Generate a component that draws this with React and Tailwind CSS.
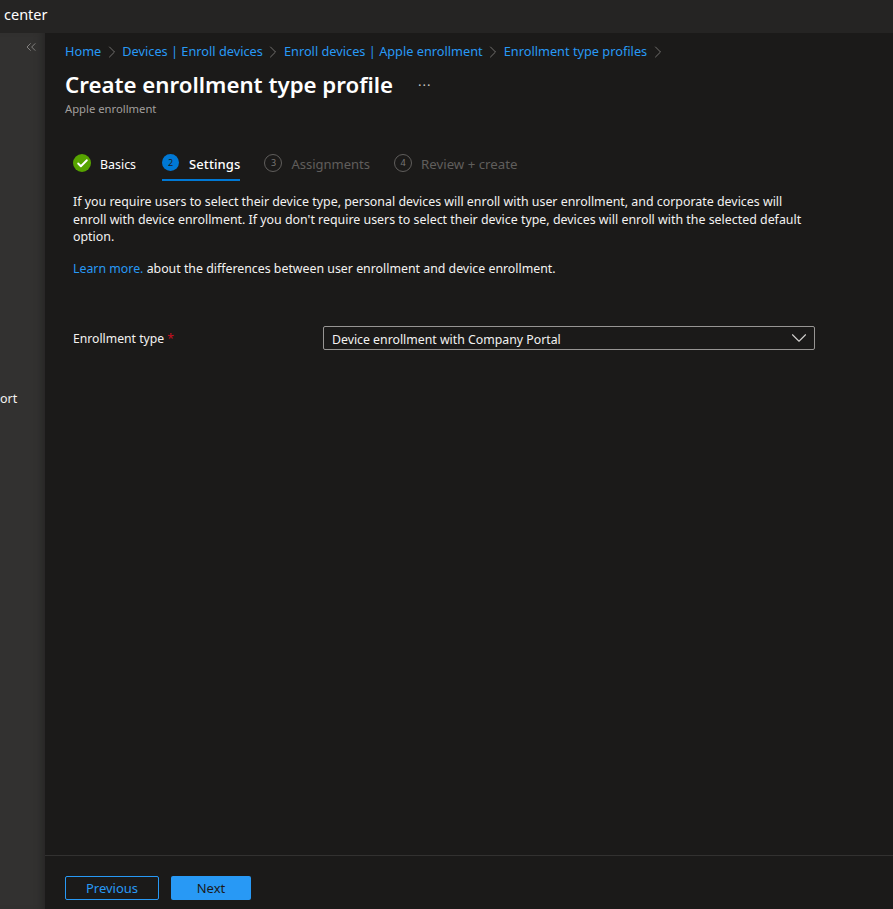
import { Check, ChevronDown, ChevronRight, ChevronsLeft } from 'lucide-react';

const crumbs = ['Home', 'Devices | Enroll devices', 'Enroll devices | Apple enrollment', 'Enrollment type profiles'];

const App = () => {
  return (
    <div className="h-[909px] w-[893px] overflow-hidden flex flex-col bg-[#1b1a19] text-white font-['Noto_Sans',sans-serif]">
      {/* Top bar */}
      <div className="h-[33px] shrink-0 bg-[#252423] pl-1 pt-[4px] text-[14.5px] leading-5">center</div>

      <div className="flex flex-1 min-h-0">
        {/* Collapsed nav */}
        <div className="w-[45px] shrink-0 flex flex-col bg-[#323130] shadow-[inset_-8px_0_8px_-6px_#252423] overflow-hidden">
          <div className="flex justify-end pr-[6px] pt-[6px] h-[356px]">
            <ChevronsLeft size={16} strokeWidth={1.1} className="text-[#a19f9d]" />
          </div>
          <div className="text-[12.5px] leading-5 text-[#f3f2f1]">ort</div>
        </div>

        <div className="flex-1 min-w-0 flex flex-col">
          <div className="flex-1 min-h-0 pl-5">
            {/* Breadcrumb */}
            <div className="flex items-center h-[18px] mt-[10px] text-[12.75px] text-[#2899f5] whitespace-nowrap">
              {crumbs.map((c) => (
                <span key={c} className="flex items-center">
                  {c}
                  <ChevronRight size={20} strokeWidth={1.1} className="text-[#797775] mx-[0.5px]" />
                </span>
              ))}
            </div>

            {/* Title */}
            <div className="flex items-center mt-[9px] h-[30px]">
              <h1 className="text-[22.25px] font-semibold leading-[30px]">Create enrollment type profile</h1>
              <span className="ml-[25px] text-[13px] leading-none text-[#c8c6c4] tracking-[1px] -mt-2">...</span>
            </div>
            <div className="text-[11.25px] leading-4 text-[#a19f9d] mt-[1px]">Apple enrollment</div>

            {/* Wizard tabs */}
            <div className="flex ml-2 mt-[30px] text-[13px] h-[37px]">
              <div className="flex items-start pt-[7px] mr-[26px]">
                <span className="w-[18px] h-[18px] rounded-full bg-[#57a300] flex items-center justify-center">
                  <Check size={13} strokeWidth={3.5} className="text-white" />
                </span>
                <span className="ml-[9px] mt-[2px] leading-[18px] text-[12.4px]">Basics</span>
              </div>
              <div className="flex items-start pt-[7px] mr-6 h-[34px] border-b-2 border-[#0078d4]">
                <span className="w-[17px] h-[17px] rounded-full bg-[#0078d4] flex items-center justify-center text-[9px] text-[#1b1a19]">2</span>
                <span className="ml-[10px] mt-[1px] leading-[18px] font-medium tracking-[0.1px]">Settings</span>
              </div>
              <div className="flex items-start pt-[7px] mr-6 text-[#605e5c]">
                <span className="w-[18px] h-[18px] rounded-full border border-[#605e5c] flex items-center justify-center text-[9px] text-[#797775]">3</span>
                <span className="ml-[9px] mt-[1px] leading-[18px]">Assignments</span>
              </div>
              <div className="flex items-start pt-[7px] text-[#605e5c]">
                <span className="w-[18px] h-[18px] rounded-full border border-[#605e5c] flex items-center justify-center text-[9px] text-[#797775]">4</span>
                <span className="ml-[9px] mt-[1px] leading-[18px] text-[13.25px]">Review + create</span>
              </div>
            </div>

            {/* Description */}
            <p className="ml-2 mt-[9px] w-[740px] text-[12.4px] leading-[17.5px] text-[#f3f2f1]">
              If you require users to select their device type, personal devices will enroll with user enrollment, and corporate devices will enroll with device enrollment. If you don't require users to select their device type, devices will enroll with the selected default option.
            </p>
            <p className="ml-2 mt-[14px] text-[12.35px] leading-[18px] text-[#f3f2f1]">
              <span className="text-[#2899f5]">Learn more.</span> about the differences between user enrollment and device enrollment.
            </p>

            {/* Enrollment type */}
            <div className="flex items-center ml-2 mt-[48px]">
              <label className="w-[250px] pt-[4px] text-[12.2px] text-[#f3f2f1]">
                Enrollment type <span className="text-[#c50f1f]">*</span>
              </label>
              <div className="w-[492px] h-6 flex items-center justify-between border border-[#979593] rounded-[2px] pl-2 pr-[2px] text-[12.3px] text-[#f3f2f1]">
                <span className="pt-[5px]">Device enrollment with Company Portal</span>
                <ChevronDown size={26} strokeWidth={1} className="text-[#d2d0ce] shrink-0 -my-1" />
              </div>
            </div>
          </div>

          {/* Footer */}
          <div className="h-[54px] shrink-0 border-t border-[#323130] pl-5 pt-[20px] flex gap-3 text-[13px]">
            <button className="w-[94px] h-6 pt-px border border-[#2899f5] rounded-[2px] text-[#2899f5]">Previous</button>
            <button className="w-20 h-6 pt-px bg-[#2899f5] rounded-[2px] text-[#1b1a19]">Next</button>
          </div>
        </div>
      </div>
    </div>
  );
};

export default App;
